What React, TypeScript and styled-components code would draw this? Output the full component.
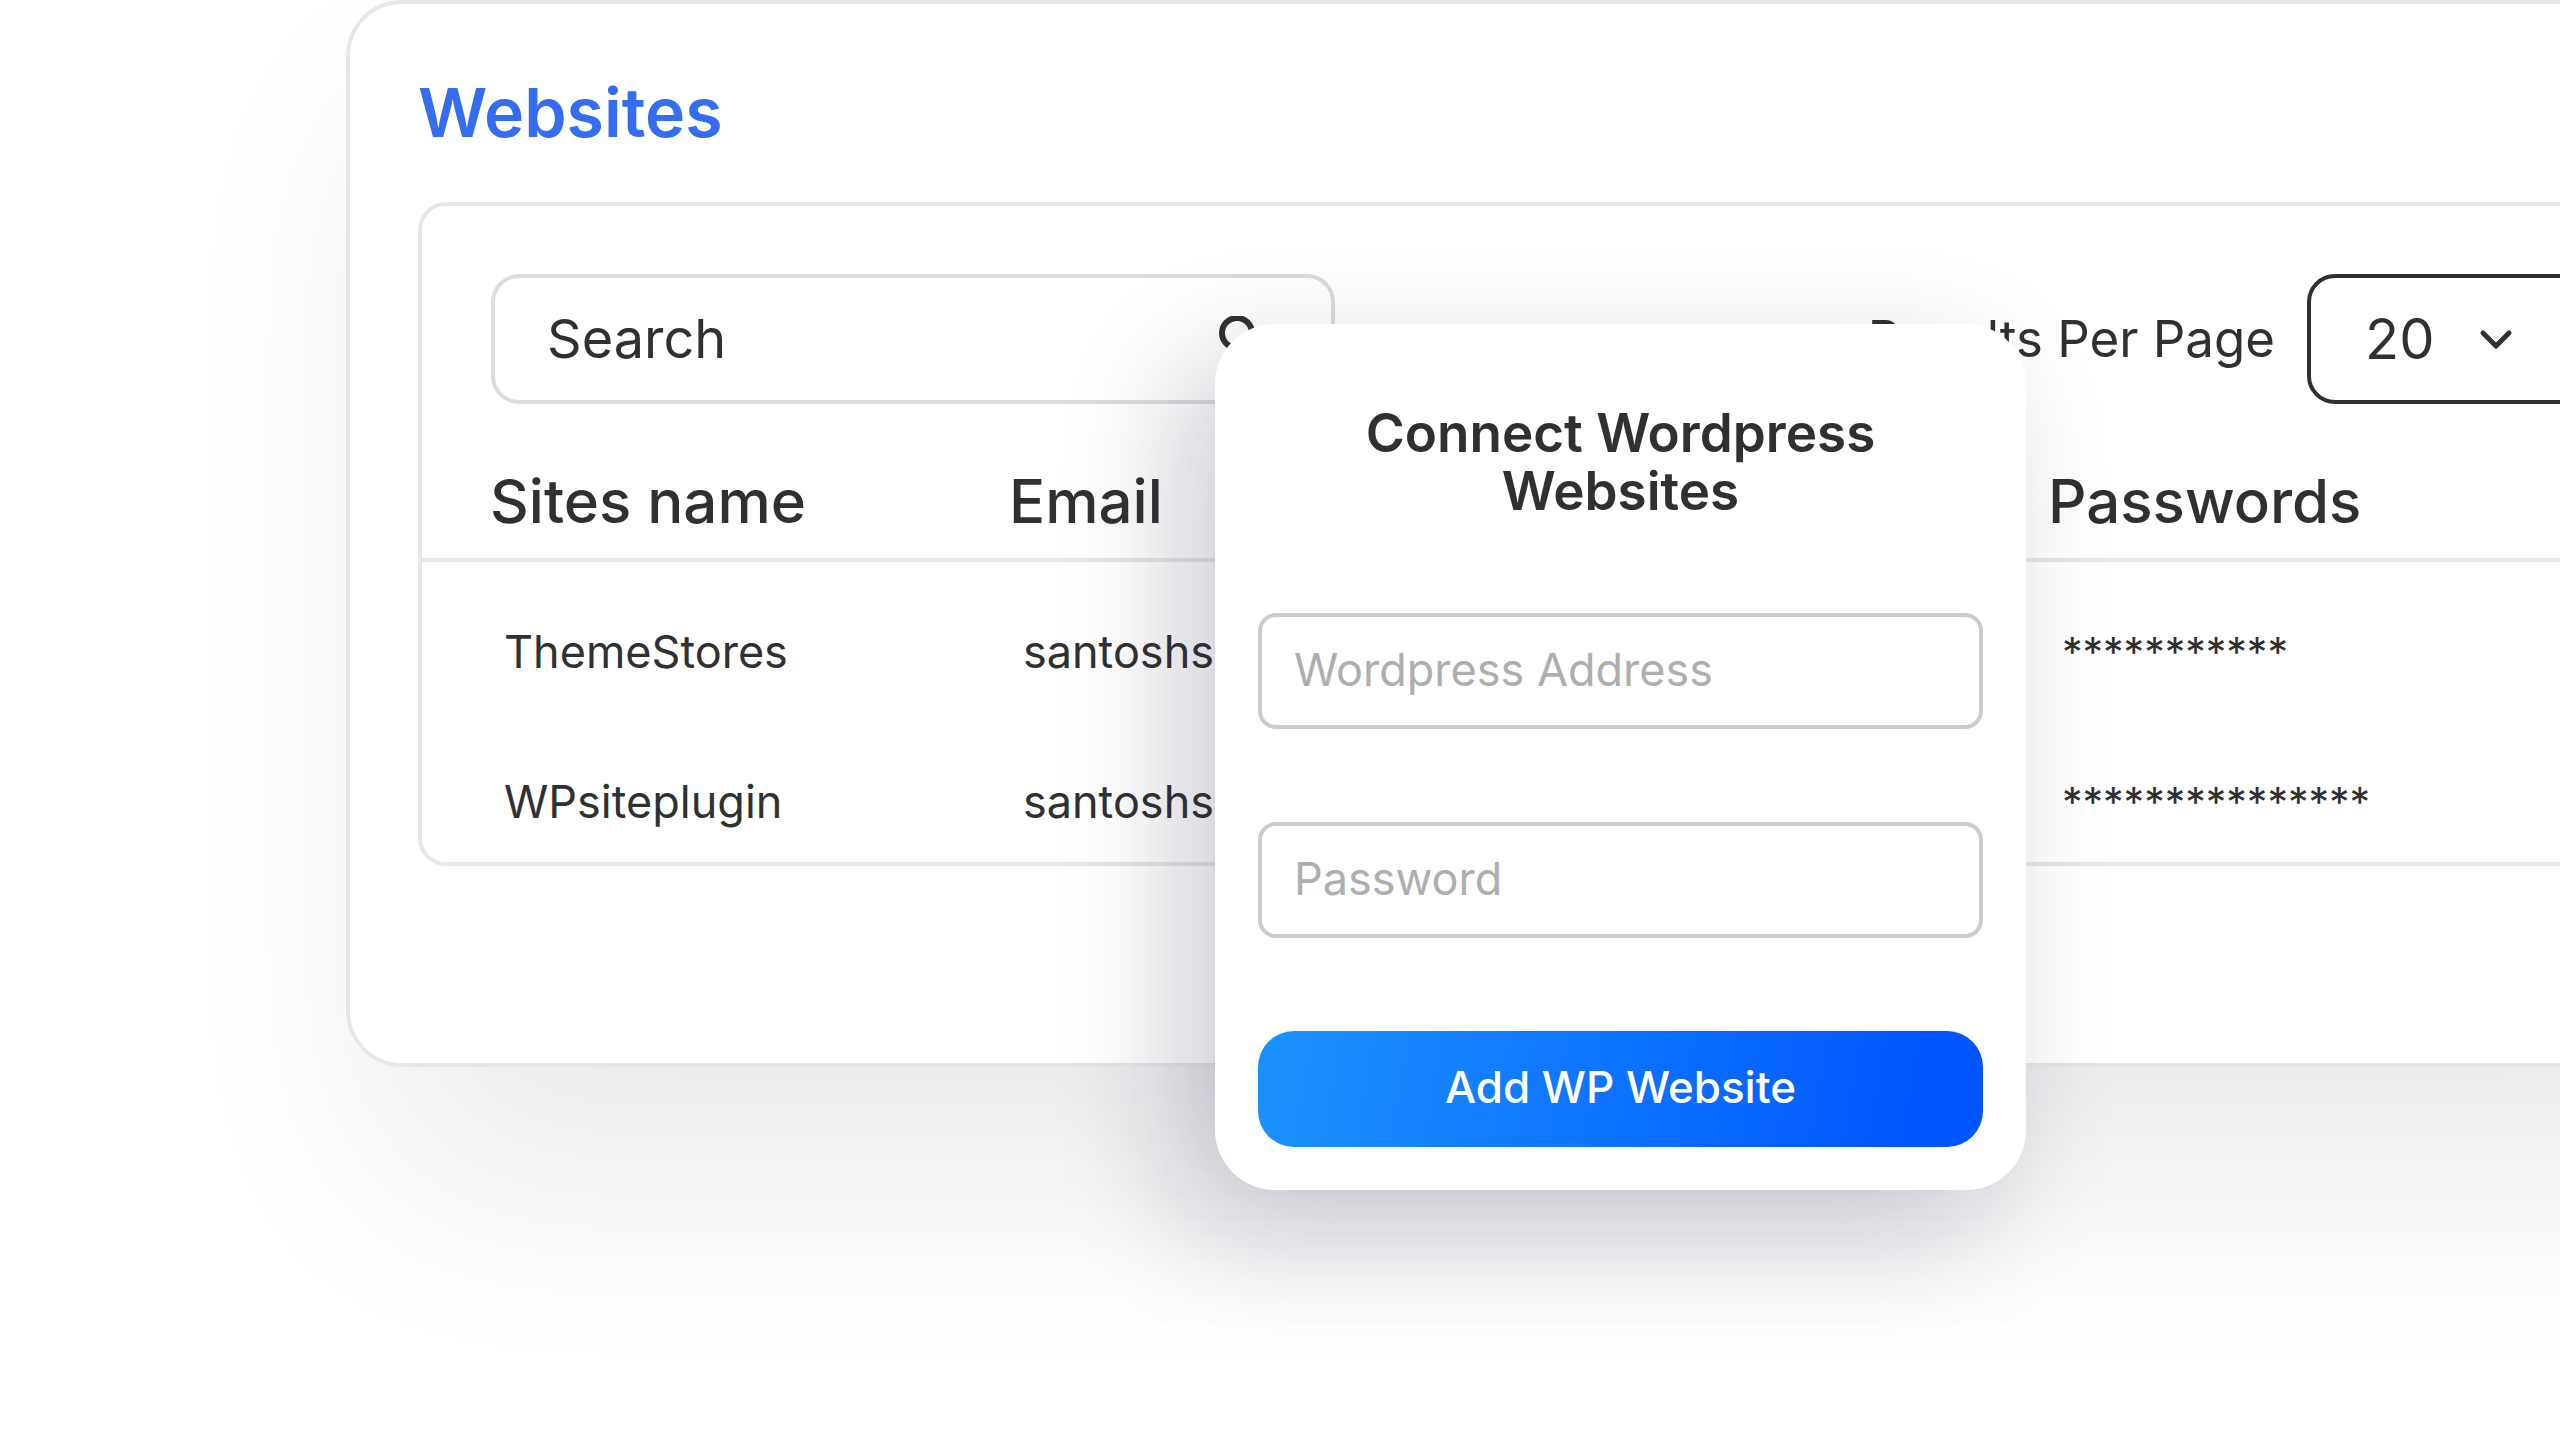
import React from "react";
import styled, { createGlobalStyle } from "styled-components";

const ink = "#2f3131";
const line = "#e7e7e8";

const GlobalStyle = createGlobalStyle`
  *, *::before, *::after { box-sizing: border-box; }
  body { margin: 0; background: #ffffff; }
  body, input, select, button { font-family: Inter, "Open Sans", sans-serif; color: ${ink}; }
`;

const Page = styled.main`
  position: relative;
  min-height: 100vh;
  padding-left: 346px;
  overflow: hidden;
  background: #ffffff;
`;

const Card = styled.section`
  margin-right: -196px;
  padding: 68px 68px 197px;
  border: 4px solid ${line};
  border-radius: 56px;
  background: #ffffff;
  box-shadow: 40px 110px 220px rgba(24, 26, 40, 0.09);
`;

const Title = styled.h1`
  margin: 0 0 50px;
  font-size: 68px;
  font-weight: 600;
  line-height: 80px;
  color: #346df1;
`;

const Panel = styled.div`
  border: 4px solid ${line};
  border-radius: 28px;
`;

const Toolbar = styled.div`
  display: flex;
  justify-content: space-between;
  align-items: center;
  padding: 68px 69px 0;
`;

const SearchBox = styled.label`
  display: flex;
  align-items: center;
  width: 844px;
  height: 130px;
  padding: 0 66px 0 52px;
  border: 4px solid #dcdcdd;
  border-radius: 28px;
`;

const SearchInput = styled.input`
  flex: 1;
  min-width: 0;
  padding: 0;
  border: 0;
  outline: 0;
  background: transparent;
  font-size: 54px;
  line-height: 64px;

  &::placeholder { color: ${ink}; opacity: 1; }
`;

const PerPage = styled.label`
  display: flex;
  align-items: center;
  gap: 32px;
  font-size: 51px;
  line-height: 64px;
`;

const SelectFrame = styled.span`
  display: grid;
  grid-template-columns: 1fr 132px;
  align-items: center;
  width: 304px;
  height: 130px;

  > svg { grid-area: 1 / 2; pointer-events: none; }
`;

const Select = styled.select`
  grid-area: 1 / 1 / 2 / 3;
  width: 100%;
  height: 100%;
  padding: 0 0 0 54px;
  appearance: none;
  border: 4px solid ${ink};
  border-radius: 28px;
  background: transparent;
  font-size: 56px;
`;

const Table = styled.table`
  width: 100%;
  table-layout: fixed;
  border-collapse: separate;
  border-spacing: 0;
  text-align: left;
`;

const NameColumn = styled.col`
  width: 587px;
`;

const EmailColumn = styled.col`
  width: 1039px;
`;

const HeadCell = styled.th<{ $first?: boolean }>`
  padding: 62px 0 22px ${(p) => (p.$first ? 68 : 0)}px;
  border-bottom: 4px solid ${line};
  font-size: 60px;
  font-weight: 500;
  line-height: 70px;
`;

const Cell = styled.td<{ $first?: boolean; $masked?: boolean }>`
  padding: 60px 0 30px ${(p) => (p.$first ? 82 : 14)}px;
  font-size: ${(p) => (p.$masked ? 41 : 45)}px;
  line-height: 60px;
`;

const Dialog = styled.form`
  position: absolute;
  top: 324px;
  left: 1215px;
  display: flex;
  flex-direction: column;
  gap: 93px;
  width: 811px;
  padding: 80px 43px 43px;
  border-radius: 60px;
  background: #ffffff;
  box-shadow: -36px 40px 120px rgba(36, 36, 68, 0.23);
`;

const DialogTitle = styled.h2`
  align-self: center;
  width: 600px;
  margin: 0;
  font-size: 53px;
  font-weight: 600;
  line-height: 58px;
  text-align: center;
`;

const Field = styled.input`
  width: 100%;
  height: 116px;
  padding: 0 32px 4px;
  border: 4px solid #cbcbcc;
  border-radius: 18px;
  outline: 0;
  background: #ffffff;
  font-size: 45px;

  &::placeholder { color: #adaeae; opacity: 1; }
`;

const Submit = styled.button`
  height: 116px;
  padding: 0 0 4px;
  border: 0;
  border-radius: 36px;
  background: linear-gradient(100deg, #1a90ff 6%, #0055ff 92%);
  font-size: 44px;
  font-weight: 500;
  color: #ffffff;
`;

const sites = [
  { name: "ThemeStores", email: "santoshs", password: "***********" },
  { name: "WPsiteplugin", email: "santoshs", password: "***************" },
];

function SearchIcon() {
  return (
    <svg width="46" height="46" viewBox="0 0 46 46" fill="none" stroke={ink} strokeWidth="6" strokeLinecap="round" aria-hidden="true">
      <circle cx="18" cy="17" r="15" />
      <path d="M29 28 42 41" />
    </svg>
  );
}

function ChevronIcon() {
  return (
    <svg width="34" height="22" viewBox="0 0 34 22" fill="none" stroke={ink} strokeWidth="5" strokeLinecap="round" strokeLinejoin="round" aria-hidden="true">
      <path d="M4 5 17 18 30 5" />
    </svg>
  );
}

export default function App() {
  return (
    <>
      <GlobalStyle />
      <Page>
        <Card>
          <Title>Websites</Title>
          <Panel>
            <Toolbar>
              <SearchBox>
                <SearchInput type="search" placeholder="Search" aria-label="Search" />
                <SearchIcon />
              </SearchBox>
              <PerPage>
                Results Per Page
                <SelectFrame>
                  <Select defaultValue="20">
                    <option value="20">20</option>
                  </Select>
                  <ChevronIcon />
                </SelectFrame>
              </PerPage>
            </Toolbar>
            <Table>
              <colgroup>
                <NameColumn />
                <EmailColumn />
                <col />
              </colgroup>
              <thead>
                <tr>
                  <HeadCell $first>Sites name</HeadCell>
                  <HeadCell>Email</HeadCell>
                  <HeadCell>Passwords</HeadCell>
                </tr>
              </thead>
              <tbody>
                {sites.map((site) => (
                  <tr key={site.name}>
                    <Cell $first>{site.name}</Cell>
                    <Cell>{site.email}</Cell>
                    <Cell $masked>{site.password}</Cell>
                  </tr>
                ))}
              </tbody>
            </Table>
          </Panel>
        </Card>

        <Dialog onSubmit={(e) => e.preventDefault()}>
          <DialogTitle>Connect Wordpress Websites</DialogTitle>
          <Field type="text" placeholder="Wordpress Address" aria-label="Wordpress Address" />
          <Field type="password" placeholder="Password" aria-label="Password" />
          <Submit type="submit">Add WP Website</Submit>
        </Dialog>
      </Page>
    </>
  );
}
